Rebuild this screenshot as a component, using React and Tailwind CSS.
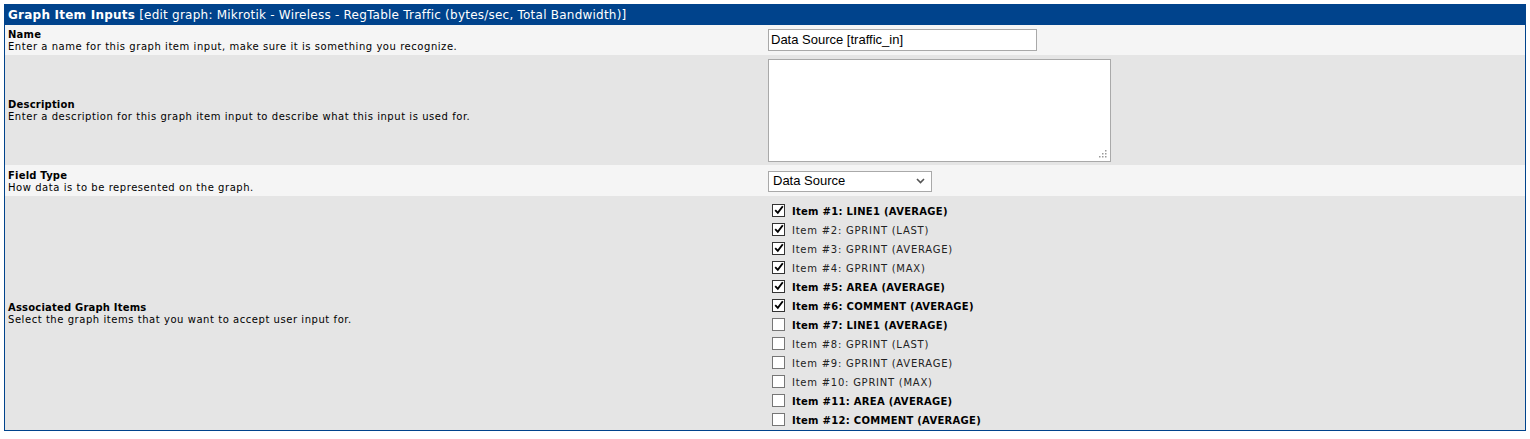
import React from "react";

const items = [
  { n: 1, t: "LINE1 (AVERAGE)", b: true, c: true },
  { n: 2, t: "GPRINT (LAST)", b: false, c: true },
  { n: 3, t: "GPRINT (AVERAGE)", b: false, c: true },
  { n: 4, t: "GPRINT (MAX)", b: false, c: true },
  { n: 5, t: "AREA (AVERAGE)", b: true, c: true },
  { n: 6, t: "COMMENT (AVERAGE)", b: true, c: true },
  { n: 7, t: "LINE1 (AVERAGE)", b: true, c: false },
  { n: 8, t: "GPRINT (LAST)", b: false, c: false },
  { n: 9, t: "GPRINT (AVERAGE)", b: false, c: false },
  { n: 10, t: "GPRINT (MAX)", b: false, c: false },
  { n: 11, t: "AREA (AVERAGE)", b: true, c: false },
  { n: 12, t: "COMMENT (AVERAGE)", b: true, c: false },
];

function Check({ checked }) {
  return (
    <span className={`relative inline-block shrink-0 w-[13px] h-[13px] mb-[1px] bg-white border ${checked ? "border-[#333333]" : "border-[#767676]"}`}>
      {checked && (
        <svg className="absolute left-[1px] top-[0px]" width="10" height="10" viewBox="0 0 10 10">
          <path d="M1.2 5.2 L3.8 7.8 L8.8 1.2" fill="none" stroke="#000" strokeWidth="1.9" />
        </svg>
      )}
    </span>
  );
}

function Label({ title, desc }) {
  return (
    <div className="w-1/2 pl-[3px] pt-[2px] flex flex-col justify-center text-[10px] leading-[12px] text-black">
      <div className="font-bold tracking-[0.2px]">{title}</div>
      <div className="tracking-[0.55px]">{desc}</div>
    </div>
  );
}

export default function App() {
  return (
    <div className="pt-[4px] pl-[4px] font-['DejaVu_Sans',Verdana,sans-serif]">
      <div className="w-[1522px] border border-[#00438c]">
        <div className="h-[20px] bg-[#00438c] text-white text-[12px] leading-[20px] pl-[3px] tracking-[0.23px]">
          <span className="font-bold">Graph Item Inputs</span>
          <span> [edit graph: Mikrotik - Wireless - RegTable Traffic (bytes/sec, Total Bandwidth)]</span>
        </div>
        <div className="flex h-[30px] bg-[#f5f5f5]">
          <Label title="Name" desc="Enter a name for this graph item input, make sure it is something you recognize." />
          <div className="w-1/2 pl-[3px] flex items-center">
            <div className="w-[269px] h-[22px] border border-[#a9a9a9] bg-white px-[2px] text-[13px] leading-[20px] text-black font-['Liberation_Sans',Arial,sans-serif]">
              Data Source [traffic_in]
            </div>
          </div>
        </div>
        <div className="flex h-[110px] bg-[#e5e5e5]">
          <Label title="Description" desc="Enter a description for this graph item input to describe what this input is used for." />
          <div className="w-1/2 pl-[3px] flex items-center">
            <div className="relative w-[343px] h-[103px] border border-[#a9a9a9] bg-white">
              <svg className="absolute right-[3px] bottom-[3px]" width="8" height="8" viewBox="0 0 8 8">
                <rect x="6" y="0" width="1.5" height="1.5" fill="#9a9a9a" />
                <rect x="3" y="3" width="1.5" height="1.5" fill="#9a9a9a" />
                <rect x="6" y="3" width="1.5" height="1.5" fill="#9a9a9a" />
                <rect x="0" y="6" width="1.5" height="1.5" fill="#9a9a9a" />
                <rect x="3" y="6" width="1.5" height="1.5" fill="#9a9a9a" />
                <rect x="6" y="6" width="1.5" height="1.5" fill="#9a9a9a" />
              </svg>
            </div>
          </div>
        </div>
        <div className="flex h-[31px] bg-[#f5f5f5]">
          <Label title="Field Type" desc="How data is to be represented on the graph." />
          <div className="w-1/2 pl-[3px] flex items-center">
            <div className="w-[164px] h-[21px] mt-[1px] border border-[#a9a9a9] bg-white pl-[4px] pr-[6px] flex items-center justify-between text-[13px] text-black font-['Liberation_Sans',Arial,sans-serif]">
              <span>Data Source</span>
              <svg width="9" height="6" viewBox="0 0 9 6">
                <path d="M1 1 L4.5 4.5 L8 1" fill="none" stroke="#555" strokeWidth="1.6" />
              </svg>
            </div>
          </div>
        </div>
        <div className="flex h-[234px] bg-[#e5e5e5]">
          <Label title="Associated Graph Items" desc="Select the graph items that you want to accept user input for." />
          <div className="w-1/2 pl-[7px] pt-[3px] flex flex-col">
            {items.map((it) => (
              <div key={it.n} className="h-[19px] flex items-end">
                <Check checked={it.c} />
                <span className={`ml-[7px] text-[10px] leading-[12px] ${it.b ? "font-bold text-black tracking-[0.28px]" : "text-[#222222] tracking-[0.75px]"}`}>
                  Item #{it.n}: {it.t}
                </span>
              </div>
            ))}
          </div>
        </div>
      </div>
    </div>
  );
}
